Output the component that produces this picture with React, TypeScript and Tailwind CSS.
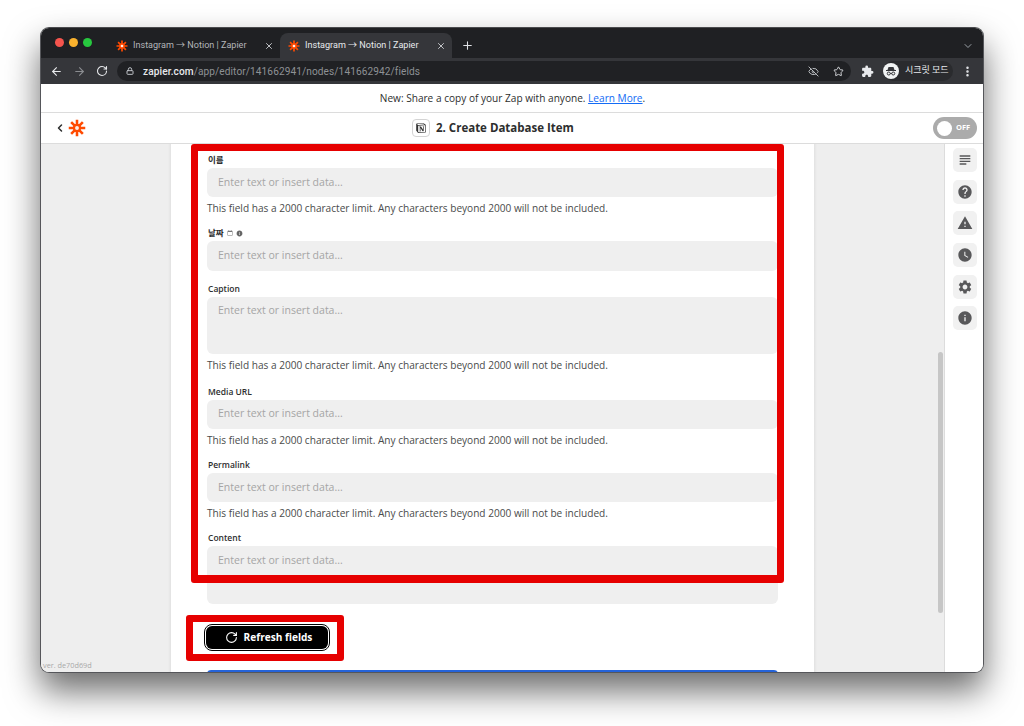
import React from "react";
import { ArrowLeft, ArrowRight, RotateCw, Lock, EyeOff, Star, MoreVertical, ChevronDown, ChevronLeft, Plus, X } from "lucide-react";
import { MdSubject, MdHelp, MdWarning, MdWatchLater, MdSettings, MdInfo, MdExtension, MdCalendarToday } from "react-icons/md";
import { SiNotion } from "react-icons/si";

function ZapLogo({ size, className = "" }: { size: number; className?: string }) {
  return (
    <svg width={size} height={size} viewBox="0 0 24 24" className={className}>
      <g stroke="#ff4a00" strokeWidth="3.4" strokeLinecap="butt">
        <line x1="12" y1="1" x2="12" y2="23" />
        <line x1="1" y1="12" x2="23" y2="12" />
        <line x1="4.2" y1="4.2" x2="19.8" y2="19.8" />
        <line x1="19.8" y1="4.2" x2="4.2" y2="19.8" />
      </g>
      <circle cx="12" cy="12" r="5.6" fill="#ff4a00" />
      <circle cx="12" cy="12" r="2.6" fill="#ffffff" opacity="0.9" />
    </svg>
  );
}

function Tab({ active }: { active?: boolean }) {
  return (
    <div className={`flex items-center h-[25px] rounded-t-[8px] ${active ? "w-[172px] bg-[#35363a] text-[#e8eaed]" : "w-[172px] text-[#b4b6ba]"} pl-[8px]`}>
      <ZapLogo size={12} className="shrink-0" />
      <span className="ml-[5px] w-[122px] text-[9.05px] whitespace-nowrap overflow-hidden">Instagram → Notion | Zapier</span>
      <X size={10} strokeWidth={2} className="ml-[9px] text-[#dfe1e5]" />
    </div>
  );
}

function Field({ label, help, h, top, shift }: { label: React.ReactNode; help?: boolean; h: number; top: number; shift?: boolean }) {
  return (
    <div style={{ marginTop: top }}>
      <div className="h-[16px] pl-[1px] flex items-center gap-[3px] text-[8.5px] font-semibold text-[#2d2e2e] leading-none">{label}</div>
      <div className={`bg-[#efefef] rounded-[6px] px-[11px] ${shift ? "pt-[6px]" : "pt-[5px]"} text-[10.5px] leading-[16px] text-[#a5a5a5]`} style={{ height: h }}>
        Enter text or insert data...
      </div>
      {help && <div className="mt-[3.5px] h-[14px] text-[10.1px] leading-[14px] text-[#4a4b4b] whitespace-nowrap">This field has a 2000 character limit. Any characters beyond 2000 will not be included.</div>}
    </div>
  );
}

function SideBtn({ children }: { children: React.ReactNode }) {
  return <div className="w-[24px] h-[24px] rounded-[5px] bg-[#f1f1f1] flex items-center justify-center text-[#58585a]">{children}</div>;
}

export default function App() {
  return (
    <div className="w-[1024px] h-[726px] bg-white overflow-hidden pt-[27px] pl-[40px]" style={{ fontFamily: '"Open Sans", "Noto Sans CJK KR", sans-serif' }}>
      <div className="w-[944px] h-[646px] rounded-[9px] overflow-hidden flex flex-col bg-white border border-[#55565a] border-t-[#4a4b4e] shadow-[0_18px_34px_rgba(0,0,0,0.58)]">
        {/* tab strip */}
        <div className="h-[30px] bg-[#1f2023] flex items-end relative shrink-0" style={{ fontFamily: 'Roboto, "Noto Sans CJK KR", sans-serif' }}>
          <div className="absolute left-[14px] top-[10px] flex gap-[5px]">
            <span className="w-[9px] h-[9px] rounded-full bg-[#f5544d]" />
            <span className="w-[9px] h-[9px] rounded-full bg-[#fab22e]" />
            <span className="w-[9px] h-[9px] rounded-full bg-[#27c83f]" />
          </div>
          <div className="ml-[67px] flex">
            <Tab />
            <Tab active />
          </div>
          <Plus size={13} strokeWidth={2} className="ml-[9px] mb-[6px] text-[#dfe1e5]" />
          <ChevronDown size={12} strokeWidth={2} className="absolute right-[9px] top-[12px] text-[#9aa0a6]" />
        </div>
        {/* toolbar */}
        <div className="h-[26px] bg-[#35363a] flex items-center shrink-0 text-[#e8eaed]" style={{ fontFamily: 'Roboto, "Noto Sans CJK KR", sans-serif' }}>
          <ArrowLeft size={13} strokeWidth={2} className="ml-[9px]" />
          <ArrowRight size={13} strokeWidth={2} className="ml-[10px] text-[#8b8d91]" />
          <RotateCw size={12} strokeWidth={2.2} className="ml-[10px]" />
          <div className="ml-[9px] w-[734px] h-[20px] rounded-full bg-[#202124] flex items-center pl-[9px]">
            <Lock size={8} strokeWidth={3} className="text-[#bdc1c6]" />
            <span className="ml-[9px] pt-[1px] text-[10.1px] font-medium tracking-[0.1px] text-[#e8eaed]">zapier.com</span>
            <span className="pt-[1px] text-[10.1px] tracking-[0.1px] text-[#8e9195]">/app/editor/141662941/nodes/141662942/fields</span>
            <EyeOff size={11} strokeWidth={2} className="ml-auto text-[#c4c7cb]" />
            <Star size={11} strokeWidth={2} className="ml-[14px] mr-[7px] text-[#dfe1e5]" />
          </div>
          <MdExtension size={13} className="ml-[10px] text-[#e8eaed]" />
          <div className="ml-[9px] w-[70px] h-[20px] rounded-full bg-[#2a2b2e] flex items-center">
            <div className="w-[16px] h-[16px] rounded-full bg-[#f1f3f4] flex items-center justify-center">
              <svg width="12" height="12" viewBox="0 0 24 24" fill="#35363a">
                <path d="M7 4h10l2 6H5z" />
                <rect x="2" y="10" width="20" height="2" />
                <circle cx="7.5" cy="17" r="3" fill="none" stroke="#35363a" strokeWidth="2" />
                <circle cx="16.5" cy="17" r="3" fill="none" stroke="#35363a" strokeWidth="2" />
                <rect x="10" y="16" width="4" height="1.6" />
              </svg>
            </div>
            <span className="ml-[6px] text-[9px] text-[#e8eaed] whitespace-nowrap">시크릿 모드</span>
          </div>
          <MoreVertical size={13} strokeWidth={2.6} className="ml-[8px]" />
        </div>
        {/* banner */}
        <div className="h-[29px] border-b border-[#dcdcdc] flex items-center justify-center text-[10.1px] text-[#2d2e2e] shrink-0 pt-[1px] pl-[1px]">
          <span>New: Share a copy of your Zap with anyone.&nbsp;</span>
          <span className="text-[#136bf5] underline">Learn More</span>
          <span>.</span>
        </div>
        {/* header */}
        <div className="h-[31px] border-b border-[#dcdcdc] flex items-center relative shrink-0">
          <ChevronLeft size={12} strokeWidth={3} className="ml-[13px] text-[#2d2e2e]" />
          <ZapLogo size={18} className="ml-[2px]" />
          <div className="absolute left-[371px] top-[6px] flex items-center">
            <div className="w-[18px] h-[18px] rounded-[4px] border border-[#d4d4d4] flex items-center justify-center">
              <SiNotion size={10} className="text-[#333]" />
            </div>
            <span className="ml-[6px] text-[11.5px] font-bold text-[#2d2e2e] whitespace-nowrap">2. Create Database Item</span>
          </div>
          <div className="ml-auto mr-[6px] w-[44px] h-[22px] rounded-full bg-[#ababab] flex items-center pl-[4px]">
            <div className="w-[15px] h-[15px] rounded-full bg-white" />
            <span className="ml-[4px] text-[7.5px] font-bold text-white">OFF</span>
          </div>
        </div>
        {/* body */}
        <div className="flex-1 flex min-h-0">
          <div className="w-[130px] bg-[#eeeeee] flex flex-col justify-end relative shrink-0">
            <span className="pl-[2px] pb-[1px] text-[7.3px] text-[#a9a9a9]">ver. de70d69d</span>
            <div className="absolute right-0 top-0 bottom-0 w-[3px] bg-gradient-to-l from-[#e2e2e2] to-transparent" />
          </div>
          <div className="w-[643px] bg-white relative overflow-hidden shrink-0 pl-[36px] pr-[36px]">
            <Field top={8} label="이름" h={29} help shift />
            <Field top={10.5} label={<><span>날짜</span><MdCalendarToday size={6} className="text-[#777]" /><MdInfo size={7} className="text-[#666]" /></>} h={30} shift />
            <Field top={10} label="Caption" h={57} help />
            <Field top={12.5} label="Media URL" h={29} help />
            <Field top={10.5} label="Permalink" h={29} help shift />
            <Field top={10.5} label="Content" h={58} shift />
            <div className="mt-[20px] ml-[-3px] w-[126px] h-[27px] rounded-[8px] border-[1.5px] border-black bg-white p-[1px]">
              <div className="w-full h-full rounded-[6px] bg-black flex items-center justify-center text-white pl-[3px]">
                <RotateCw size={13} strokeWidth={2} />
                <span className="ml-[6px] pt-[1px] text-[10.1px] font-bold whitespace-nowrap">Refresh fields</span>
              </div>
            </div>
            <div className="mt-[19px] h-[4px] rounded-t-[6px] bg-[#2563d9]" />
            {/* annotation frames */}
            <div className="absolute left-[20px] top-0 w-[593px] h-[439px] border-x-[7px] border-b-[8px] border-t-[7px] border-[#e60000] rounded-[3px] pointer-events-none" />
            <div className="absolute left-[15px] top-[471px] w-[158px] h-[46px] border-[7px] border-[#e60000] rounded-[3px] pointer-events-none" />
          </div>
          <div className="flex-1 bg-[#eeeeee] relative border-r border-[#dcdcdc]">
            <div className="absolute left-0 top-0 bottom-0 w-[3px] bg-gradient-to-r from-[#e2e2e2] to-transparent" />
            <div className="absolute right-[1px] top-[208px] w-[5px] h-[261px] rounded-full bg-[#c6c6c6]" />
          </div>
          <div className="w-[38px] bg-white flex flex-col items-center gap-[7.7px] pt-[4px] pl-[1px] shrink-0">
            <SideBtn><MdSubject size={16} /></SideBtn>
            <SideBtn><MdHelp size={16} /></SideBtn>
            <SideBtn><MdWarning size={16} /></SideBtn>
            <SideBtn><MdWatchLater size={16} /></SideBtn>
            <SideBtn><MdSettings size={16} /></SideBtn>
            <SideBtn><MdInfo size={16} /></SideBtn>
          </div>
        </div>
      </div>
    </div>
  );
}
